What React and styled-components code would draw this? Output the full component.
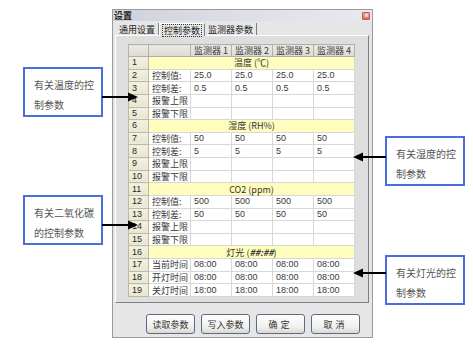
import React from "react";
import styled, { createGlobalStyle } from "styled-components";

const GlobalStyle = createGlobalStyle`
  html, body { margin: 0; padding: 0; background: #ffffff; }
  body { font-family: "Liberation Sans", "Noto Sans CJK SC", sans-serif; }
`;

const Page = styled.div`
  position: relative;
  width: 473px;
  height: 348px;
  box-sizing: border-box;
  padding: 9px 0 0 112px;
  overflow: hidden;
`;

const Dialog = styled.div`
  width: 261px;
  height: 329px;
  box-sizing: border-box;
  border: 1px solid #9b9b9b;
  background: #e6e6e6;
  display: flex;
  flex-direction: column;
`;

const TitleBar = styled.div`
  height: 11px;
  display: flex;
  align-items: center;
  justify-content: space-between;
  padding: 0 1px 0 1px;
  background: linear-gradient(to right, #cfd2de, #dfe1ea 60%, #e8e9ef);
`;

const Title = styled.span`
  font-family: "Noto Sans CJK SC", sans-serif;
  font-weight: 700;
  font-size: 9px;
  line-height: 11px;
  color: #1a1a1a;
`;

const CloseButton = styled.span`
  width: 8px;
  height: 8px;
  margin-right: 1px;
  background: linear-gradient(#f0a898, #d9705e);
  border: 1px solid #c45a4a;
  box-sizing: border-box;
  border-radius: 1px;
  position: relative;
  &::before, &::after {
    content: "";
    position: absolute;
    left: 2px;
    top: 2.5px;
    width: 3px;
    height: 1px;
    background: #fff;
    transform: rotate(45deg);
  }
  &::after { transform: rotate(-45deg); }
`;

const Body = styled.div`
  flex: 1;
  display: flex;
  flex-direction: column;
  padding: 1px 3px 0 2px;
`;

const TabStrip = styled.div`
  display: flex;
  align-items: flex-end;
  height: 13px;
  padding-left: 1px;
`;

const Tab = styled.div`
  font-family: "Noto Sans CJK SC", sans-serif;
  font-size: 9px;
  line-height: 11px;
  color: #222;
  padding: 0 3px;
  height: ${(p) => (p.$active ? 13 : 12)}px;
  box-sizing: border-box;
  display: flex;
  align-items: center;
  background: #e6e6e6;
  border-right: 1px solid #7f7f7f;
  border-top: ${(p) => (p.$active ? "1px solid #ffffff" : "none")};
  border-left: ${(p) => (p.$active ? "1px solid #ffffff" : "none")};
  margin-bottom: ${(p) => (p.$active ? -1 : 0)}px;
  position: relative;
  z-index: ${(p) => (p.$active ? 1 : 0)};
`;

const TabLabel = styled.span`
  outline: ${(p) => (p.$focus ? "1px dotted #333" : "none")};
  padding: 0 1px;
`;

const Panel = styled.div`
  height: 268px;
  box-sizing: border-box;
  border-top: 1px solid #ffffff;
  border-left: 1px solid #ffffff;
  border-right: 1px solid #7f7f7f;
  border-bottom: 1px solid #7f7f7f;
  background: #dedede;
  padding: 8px 0 0 12px;
`;

const Grid = styled.table`
  border-collapse: collapse;
  table-layout: fixed;
  width: 226px;
  font-size: 9px;
  color: #3a3a3a;
`;

const Row = styled.tr`
  height: ${(p) => p.$h}px;
`;

const Cell = styled.td`
  padding: 0 0 0 3px;
  line-height: 11px;
  height: ${(p) => p.$h}px;
  border: 1px solid #d8d8d8;
  background: #ffffff;
  white-space: nowrap;
  overflow: hidden;
  color: #3a3a3a;
  font-family: ${(p) => (p.$cjk ? '"Noto Sans CJK SC", sans-serif' : '"Liberation Sans", "Noto Sans CJK SC", sans-serif')};
`;

const NumCell = styled.td`
  padding: 0 0 0 3px;
  line-height: 11px;
  border: 1px solid #bdb9a4;
  background: linear-gradient(#f3f1e2, #e8e5cf);
  font-family: "Liberation Sans", sans-serif;
  font-size: 9px;
  color: #2a2a2a;
`;

const HeadCell = styled.td`
  padding: 0;
  line-height: 11px;
  border: 1px solid #b2b0a8;
  background: linear-gradient(#ebeae5, #dcdad2);
  text-align: center;
  font-family: "Noto Sans CJK SC", "Liberation Sans", sans-serif;
  font-size: 9px;
  color: #3a3a3a;
`;

const SectionCell = styled.td`
  padding: 0;
  line-height: 11px;
  border: 1px solid #d8d8d8;
  background: #fffdbd;
  text-align: center;
  font-family: "Noto Sans CJK SC", "Liberation Sans", sans-serif;
  font-size: 9px;
  color: #333;
`;

const Hash = styled.span`
  font-weight: 700;
  font-style: italic;
`;

const ButtonRow = styled.div`
  display: flex;
  justify-content: flex-end;
  gap: 6px;
  padding: 11px 9px 0 0;
`;

const Button = styled.button`
  width: 49px;
  height: 20px;
  box-sizing: border-box;
  padding: 0;
  border: 1px solid #5b6b86;
  border-radius: 3px;
  background: linear-gradient(#ffffff, #eeeeea 70%, #d9d8d0);
  font-family: "Noto Sans CJK SC", sans-serif;
  font-size: 9px;
  color: #333;
  letter-spacing: ${(p) => (p.$spaced ? "3px" : "0")};
`;

const Callout = styled.div`
  position: absolute;
  left: ${(p) => p.$x}px;
  top: ${(p) => p.$y}px;
  width: 80px;
  height: 50px;
  box-sizing: border-box;
  border: 2px solid #4a6de0;
  background: #ffffff;
  padding: 6px 0 0 9px;
  font-family: "Noto Sans CJK SC", serif;
  font-size: 10px;
  line-height: 20px;
  color: #555;
`;

const CalloutText = styled.div`
  width: 61px;
`;

const ArrowSvg = styled.svg`
  position: absolute;
  left: ${(p) => p.$x}px;
  top: ${(p) => p.$y - 5}px;
  overflow: visible;
`;

function Arrow({ x, y, length, dir }) {
  const right = dir === "right";
  return (
    <ArrowSvg $x={x} $y={y} width={length} height={10}>
      {right ? (
        <>
          <line x1="0" y1="5" x2={length - 8} y2="5" stroke="#000" strokeWidth="2" />
          <polygon points={`${length - 10},0.5 ${length},5 ${length - 10},9.5`} fill="#000" />
        </>
      ) : (
        <>
          <line x1="8" y1="5" x2={length} y2="5" stroke="#000" strokeWidth="2" />
          <polygon points="10,0.5 0,5 10,9.5" fill="#000" />
        </>
      )}
    </ArrowSvg>
  );
}

const sections = [
  {
    title: "温度 (℃)",
    rows: [
      ["控制值:", "25.0"],
      ["控制差:", "0.5"],
      ["报警上限", ""],
      ["报警下限", ""],
    ],
  },
  {
    title: "湿度 (RH%)",
    rows: [
      ["控制值:", "50"],
      ["控制差:", "5"],
      ["报警上限", ""],
      ["报警下限", ""],
    ],
  },
  {
    title: "CO2 (ppm)",
    rows: [
      ["控制值:", "500"],
      ["控制差:", "50"],
      ["报警上限", ""],
      ["报警下限", ""],
    ],
  },
  {
    title: "light",
    rows: [
      ["当前时间", "08:00"],
      ["开灯时间", "08:00"],
      ["关灯时间", "18:00"],
    ],
  },
];

const ROW_H = 12.63;

function Table() {
  let n = 0;
  const body = [];
  sections.forEach((s) => {
    n += 1;
    body.push(
      <Row key={`s${n}`} $h={ROW_H}>
        <NumCell>{n}</NumCell>
        <SectionCell colSpan={5}>
          {s.title === "light" ? (
            <>
              灯光 (<Hash>##:##</Hash>)
            </>
          ) : (
            s.title
          )}
        </SectionCell>
      </Row>
    );
    s.rows.forEach((r) => {
      n += 1;
      body.push(
        <Row key={`r${n}`} $h={ROW_H}>
          <NumCell>{n}</NumCell>
          <Cell $cjk>{r[0]}</Cell>
          <Cell>{r[1]}</Cell>
          <Cell>{r[1]}</Cell>
          <Cell>{r[1]}</Cell>
          <Cell>{r[1]}</Cell>
        </Row>
      );
    });
  });
  return (
    <Grid>
      <colgroup>
        <col style={{ width: 20 }} />
        <col style={{ width: 42 }} />
        <col style={{ width: 41 }} />
        <col style={{ width: 41 }} />
        <col style={{ width: 41 }} />
        <col style={{ width: 41 }} />
      </colgroup>
      <tbody>
        <Row $h={12}>
          <HeadCell />
          <HeadCell />
          <HeadCell>监测器 1</HeadCell>
          <HeadCell>监测器 2</HeadCell>
          <HeadCell>监测器 3</HeadCell>
          <HeadCell>监测器 4</HeadCell>
        </Row>
        {body}
      </tbody>
    </Grid>
  );
}

export default function App() {
  return (
    <>
      <GlobalStyle />
      <Page>
        <Dialog>
          <TitleBar>
            <Title>设置</Title>
            <CloseButton />
          </TitleBar>
          <Body>
            <TabStrip>
              <Tab>通用设置</Tab>
              <Tab $active>
                <TabLabel $focus>控制参数</TabLabel>
              </Tab>
              <Tab>监测器参数</Tab>
            </TabStrip>
            <Panel>
              <Table />
            </Panel>
            <ButtonRow>
              <Button>读取参数</Button>
              <Button>写入参数</Button>
              <Button $spaced>确定</Button>
              <Button $spaced>取消</Button>
            </ButtonRow>
          </Body>
        </Dialog>

        <Callout $x={23} $y={67}>
          <CalloutText>有关温度的控制参数</CalloutText>
        </Callout>
        <Arrow x={102} y={97} length={36} dir="right" />

        <Callout $x={23} $y={195}>
          <CalloutText>有关二氧化碳的控制参数</CalloutText>
        </Callout>
        <Arrow x={102} y={225} length={36} dir="right" />

        <Callout $x={385} $y={136}>
          <CalloutText>有关湿度的控制参数</CalloutText>
        </Callout>
        <Arrow x={353} y={157} length={33} dir="left" />

        <Callout $x={385} $y={255}>
          <CalloutText>有关灯光的控制参数</CalloutText>
        </Callout>
        <Arrow x={353} y={273} length={33} dir="left" />
      </Page>
    </>
  );
}
